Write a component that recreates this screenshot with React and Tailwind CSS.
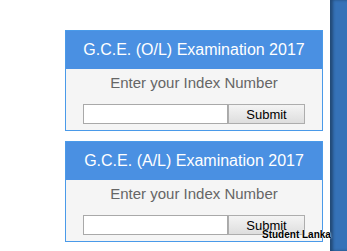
export default function App() {
  const exams = ['G.C.E. (O/L) Examination 2017', 'G.C.E. (A/L) Examination 2017']

  return (
    <div className="relative flex min-h-[251px] bg-white font-['Liberation_Sans',Arial,sans-serif]">
      <div className="flex-1 pt-[30px] pl-[65px]">
        <div className="flex flex-col gap-[10px]">
          {exams.map((exam) => (
            <div key={exam} className="w-[258px] border border-[#4a9ae9]">
              <div className="flex h-[38px] items-center justify-center bg-[#4a90e2] text-[16px] text-white">
                {exam}
              </div>
              <div className="bg-[#f5f5f5] pt-[5px] pb-[6px]">
                <p className="text-center text-[15px] leading-[18px] text-[#666]">Enter your Index Number</p>
                <form className="mt-[12px] flex pl-[17px]" onSubmit={(e) => e.preventDefault()}>
                  <input
                    type="text"
                    className="h-[20px] w-[145px] border border-[#a9a9a9] bg-white outline-none"
                  />
                  <button
                    type="submit"
                    className="h-[20px] w-[77px] border border-[#adadad] bg-gradient-to-b from-[#f4f4f4] to-[#dedede] text-[13px] leading-none text-black"
                  >
                    Submit
                  </button>
                </form>
              </div>
            </div>
          ))}
        </div>
      </div>
      <div className="w-[17px] bg-[#3572b8] shadow-[inset_3px_0_3px_rgba(0,0,0,0.35)]" />
      <span className="absolute left-[262px] top-[227px] text-[10px] font-bold text-black [text-shadow:0_0_2px_#fff,0_0_1px_#fff]">
        Student Lanka
      </span>
    </div>
  )
}
